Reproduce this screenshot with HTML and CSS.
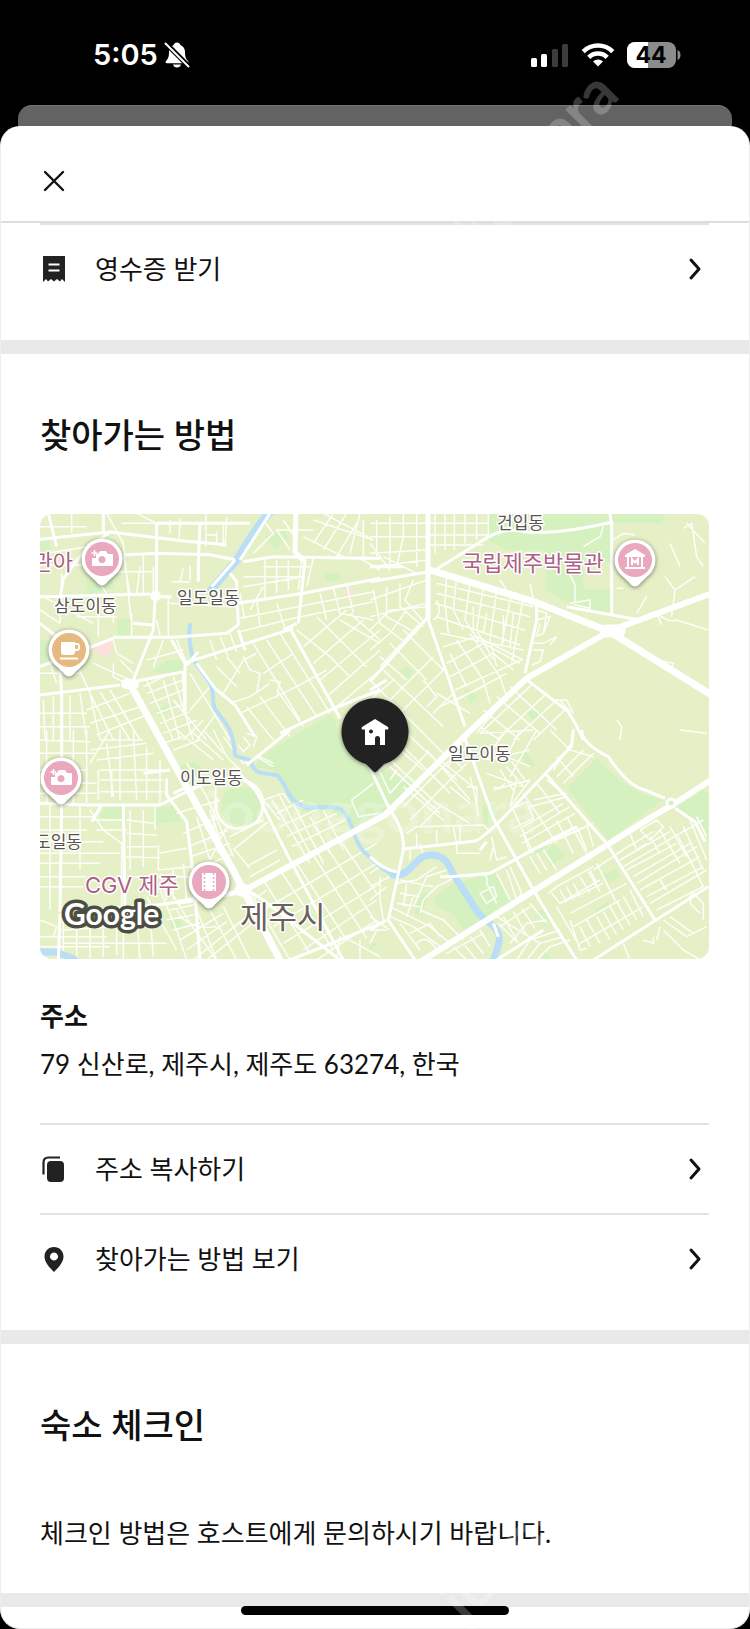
FILE: index.html
```html
<!DOCTYPE html>
<html lang="ko">
<head>
    <meta charset="UTF-8">
    <meta name="viewport" content="width=device-width, initial-scale=1.0">
    <title>찾아가는 방법</title>
    <link rel="stylesheet" href="styles.css">
</head>
<body>
    <div class="status-bar">
        <div class="status-left">
            <span class="time">5:05</span>
            <svg width="26" height="28" viewBox="0 0 26 28">
                <path d="M13 1.5c1.8 0 3 1 3.4 2.4 3 1.2 4.600 3.7 4.600 7.100 0 5.500 1.200 7 3 9 .8.9.5 2.200-.8 2.200H2.800c-1.300 0-1.600-1.300-.8-2.200 1.800-2 3-3.500 3-9 0-3.400 1.600-5.900 4.600-7.100C10 2.500 11.200 1.500 13 1.500z" fill="#fff"/>
                <path d="M9 23.5h8c-.5 2-2 3-4 3s-3.500-1-4-3z" fill="#fff"/>
                <path d="M0 .5l25 25" stroke="#000" stroke-width="5"/>
                <path d="M1.5 2.500l23 23" stroke="#fff" stroke-width="2" stroke-linecap="round"/>
            </svg>
        </div>
        <div class="status-right">
            <svg width="38" height="24" viewBox="0 0 38 24">
                <rect x="0" y="15" width="6" height="9" rx="1.5" fill="#fff"/>
                <rect x="10" y="11" width="6" height="13" rx="1.5" fill="#fff"/>
                <rect x="21" y="6" width="6" height="18" rx="1.5" fill="#3d3d3d"/>
                <rect x="31" y="1" width="6" height="23" rx="1.5" fill="#3d3d3d"/>
            </svg>
            <svg width="34" height="24" viewBox="0 0 34 24">
                <g fill="none" stroke="#fff" stroke-width="4.5">
                    <path d="M2.2 8.6a21 21 0 0 1 29.6 0"/>
                    <path d="M7.8 14.4a13 13 0 0 1 18.4 0"/>
                </g>
                <path d="M17 23.5l-5-5a7 7 0 0 1 10 0z" fill="#fff"/>
            </svg>
            <svg class="battery" width="54" height="26" viewBox="0 0 54 26">
                <rect x="0" y="0" width="49" height="26" rx="8" fill="#8c8c8c"/>
                <path d="M21 0H8a8 8 0 0 0-8 8v10a8 8 0 0 0 8 8h13z" fill="#fff"/>
                <path d="M50.5 8c4 1 4 9 0 10z" fill="#8c8c8c"/>
                <text x="24" y="21" text-anchor="middle">44</text>
            </svg>
        </div>
    </div>
    <div class="back-card"></div>

    <main class="sheet">
        <header class="sheet-header">
            <button class="close" aria-label="닫기">
                <svg width="24" height="24" viewBox="0 0 24 24"><path d="M3 3l18 18M21 3L3 21" stroke="#111" stroke-width="2.4" stroke-linecap="round"/></svg>
            </button>
        </header>

        <section class="section section-receipt">
            <button class="row">
                <svg class="row-icon" width="28" height="28" viewBox="0 0 28 28">
                    <path d="M3 1h22v26l-3-3-2 2.5-3-2.500-3 2.500-3-2.500-3 2.500-2-2.500-3 3z" fill="#222"/>
                    <path d="M8.500 9.500h11M8.500 15.500h11" stroke="#fff" stroke-width="2.200"/>
                </svg>
                <span class="row-text">영수증 받기</span>
                <svg class="chevron" width="28" height="28" viewBox="0 0 28 28"><path d="M10 5l8 9-8 9"/></svg>
            </button>
        </section>

        <section class="section">
            <h2>찾아가는 방법</h2>
            <svg class="map" viewBox="0 0 669 445">
                <defs>
                    <g id="pin">
                        <path d="M0 26.5C-2 26.5-4 25-6 22.5L-15 14A20.5 20.5 0 1 1 15 14L6 22.5C4 25 2 26.5 0 26.5z" fill="#fff"/>
                    </g>
                    <g id="camera" fill="#fff">
                        <path fill-rule="evenodd" d="M-4-5l2-3h6l2 3h4q1 0 1 1V6q0 1-1 1H-9q-1 0-1-1V-1h4v-4zM0-3a3.600 3.600 0 1 0 .01 0z"/>
                        <path d="M-8.300-9h1.600v2.200h2.200v1.600h-2.200V-3h-1.600v-2.200h-2.200v-1.600h2.200z"/>
                    </g>
                </defs>
                <rect width="669" height="445" fill="#e5f0c6"/>

                <!-- parks -->
                <g fill="#d5f1c0">
                    <g transform="translate(-10 -14) scale(.33333)">
                        <path d="M30 120l26 0 8 30-34 5zM170 240l80-30 0 55-80 20zM262 358h40l-4 60-36-10zM705 110l60-22 10 30-40 30zM885 218h43v25h-43zM365 515l50-35 45 0 6 40-60-2zM378 630l50-24 4 22-46 22zM30 420h20v70H30z"/>
                    </g>
                    <g transform="translate(330 -14) scale(.33333)">
                        <path d="M355 40h365l7 65-2 235-100-18-98-50V150h-120l-53-30zM720 40h165l-10 30H730zM90 512l20-14 20 18-18 22zM283 568l42 20-25 28zM470 640l22-18 18 22-20 20z"/>
                        <path d="M640 190h84v76h-84z" fill="#e5f0c6"/>
                    </g>
                    <g transform="translate(-10 216) scale(.33333)">
                        <path d="M695 78L905-50l45 120 200 90-105 110-75 15q-40-50-150-40-45-15-60-80-30-60-90-50zM440 110l55-15 30 30 0 40-55 25zM205 262l25-38h55l-2 46zM375 235l55-10 25 48-75 8zM575 230q0-60 55-60 60 0 62 55 0 60-60 60-60-5-57-55zM420 565h32v30h-30z"/>
                    </g>
                    <g transform="translate(330 216) scale(.33333)">
                        <path d="M590 175L680 85l75 70 70 40 55 15-165 120zM920 230l60-55 35 15v130l-40-50zM195 500l50-38 130-33 50 95-145 75-30-45-55-30zM337 225h38l-5 70-30-20zM447 75l18-12 32 40-15 10zM480 360l50-28 5 20-45 24zM520 370l35-28 30 32-42 38zM150 490h25l-20 65h-22zM700 435l40-20 10 20-35 28zM675 540l40-26 6 14-38 24zM500 545l25-15 15 40-15 20zM0 170l30 70-30 20zM510 690l15-25 20 20zM0 640h25l-25 20z"/>
                    </g>
                </g>
                <g fill="#fae1da" transform="translate(-10 -14) scale(.33333)">
                    <path d="M185 442l65-25-2 40-30 18zM945 264h32l-12 20-14 6z"/>
                </g>

                <!-- small streets -->
                <g fill="none" stroke="#fdfefa" stroke-width="4.500">
                    <path transform="translate(-10 -14) scale(.33333)" d="M30 80h140M125 40v60M50 160l120-20M30 195h130M95 220l-5 150M230 40l50 90 15 150 8 80M275 70h100M320 40l60 30M420 60l0 40M450 55l-2 60M160 180l70 100M280 170l20 110M340 165v115M240 215h130M330 200l-10 80M370 200v80M40 290l150 80M205 290v120M250 290v80M305 340v70M30 330l60 40M140 350h120M380 360l10 50M415 290v120M528 40v100M580 75v65M530 105h28M560 95v35M590 50l-5 90M460 205l-10 40M480 195v45M425 245h55M410 310l210 10M640 230h60M640 260l180-30M660 330l40-70M705 180v115M740 180v100M775 180v90M815 180l-10 90M850 175l-20 85M700 200h140M680 230h140M630 355l200-40 200-40M630 395l160-40 240-50M630 280l15 80M680 300l10 80M740 310l25 75M910 260l20 80 100 20M870 280l20 80M950 250l20 90M850 90h-110l40 60M760 60l40 60M700 60l30 40-60 60M850 130l60-90M880 150l70-110M920 170l60-100M960 160l30-120M820 110l130 65M850 60l180 60M880 40l150 80M1000 60v110M980 170l70 40M930 360l120 70M960 340l90 80M800 390l100 80 60 60M860 350l90 90 60 60M820 440l130-110M850 490l150-130M870 540l180-150M890 590l160-140M920 620l130-110M750 400l150 240M710 420l150 230M670 430l140 230M700 520l90-60M640 470l20 40 30 10-10 60M720 540l30 5-10 50M560 500l60 60M590 470l40 50M630 640l170-80 90-50M600 610l60-20 60-40M650 620l80 100M690 590l90 120M740 570l80 110M580 580l60-100 40-20M540 420l20 60M570 410l25 60M600 400l20 55M480 520l60 100 60 100M440 420l30 70M250 420l10 40 50 30M190 490l110 50M140 490l40 90 30 140M60 490l20 60M30 520h120M40 600l5 120M70 590v130M120 585v135M150 580l20 140M30 640h140M30 680h150M180 580l70 140M210 575l90 145M240 570l90 150M170 630l130-50M180 670l150-50M200 705l150-60M340 560l80-40M350 580l110-40M360 610l100-40M380 640l90-30M390 670l90-35M400 700l100-40M400 540l50 180M430 530l60 190M350 540l80 180M500 500l40 60-60 70M250 490l0 40 40 20M270 480l40 40M350 480l110-30M370 500l30-80M430 600l100 120M520 660l-60 60M560 640l-60 80"/>
                    <path transform="translate(330 -14) scale(.33333)" d="M0 70h175M0 110h170M0 160l170-10M0 200l170-20M20 60v110M60 50v150M100 40v70l-20 90M140 40v160M0 130l60 80M40 170l100 50M195 40v120M225 40v110M253 40v110M285 40v90M320 40v80M355 40v70M180 70h175M180 105h175M180 135h160M10 270l20 100 80 60M50 260v90l90 50M90 250l0 70 70 60M130 240l-25 60 60 70M0 300l170-60M0 350l170-40M0 390l60-60 110-10M0 450l60-50 50-70M30 500l120-130M30 470l80 70M60 430l110 110M100 390l120 120M60 600l130-130M90 640l130-130M0 540l80 80 80 80M40 510l180 170M0 600l70-60M230 230l-5 80 10 90M260 230l-10 100 30 60M300 250l-15 110 40 60M340 260l-20 130 50 90M380 270l-20 150 20 80M425 275l-30 160M460 290l-35 200M200 250l290 70M200 280l280 70M195 310l270 80M200 350l250 85M210 400l250 50M220 440l100-30 140 70M230 490l110-60 110 60M240 530l130-70 60 50M255 570l200-90M260 600l150-80M200 300q20 40-10 60M300 400l90 130 20 60M260 420l80 120 20 70M240 460l50 100M400 345v85M430 340l-10 100M310 320v70M350 340l-10 60M500 360l40-10-20 50-25 10M500 330l30 10-10 60M510 370l-10 40M480 430h40l40-20-20 25M490 450l30 0-10 35-25 10M480 250l10 50M390 240l20 30M595 215l20 40 0 60 45 10 0-25-60 10M730 120l30-20 35 5M640 140l50-30 10-30M740 265h20M950 70l55 60M965 70l-25 15M965 70l15 100 20 30M885 230l30 40-10 80M900 130l30 70M915 270l60-40M830 290l-30 50M860 340l15 35M860 340q40 30 60 20l95 30M860 480l50 10-10 20M740 660l15 20-5 40M930 690l80 10M160 540l40 50-30 30M200 580l100 60M210 620l130-60M190 640l60-60M330 680l60 40M340 630l110 90M380 590l130 110M420 560l140 130M330 700l160-150M380 720l150-140M430 720l130-120M490 720l100-95M550 600l40 0 20 40M570 600l30 35M460 540q-60 60-140 160"/>
                    <path transform="translate(-10 216) scale(.33333)" d="M30 30l150 5M30 70h170M30 120h140M50 0v220M130 0v220M170 0v220M205 120v90M245 120v80M30 160h170M30 190h170M210 30h130M180 60l170-20M200 90l170-20M210 120h210M210 150h190M210 185h190M230 40l20 160M270 0v210M310 0l10 210M350 50v160M390 90l0 130M240 0l-60 100M60 220v320M150 220v200M180 240l40 60 55 40 0 200M30 260h160M30 300h140M30 335h190M30 370h240M30 400h180M30 440h140M30 470h130M190 270h90M200 300h90M300 240v180M340 240v170M375 230v70M290 270l80 10M290 310l90 5M290 350h90M290 380l100 3M385 370l85-15M385 370v50l100-10M385 345v40M300 440h180M390 430l20 80M430 420v90M460 400l10 110M350 500l90 160M390 480l50 120 30 90M420 480l60 100 80 110M420 540l70-15M410 570l80-15M430 600l80-20M450 630l130-80M470 660l120-85M490 690l160-130M530 690l150-120M500 540l60 150M540 540l80 150M580 530l80 160M440 540q30 60 120 50M30 570l50 20-10 30M30 620h200M30 650h210M100 560v130M140 560v130M180 555v130M220 550v130M260 545v130M100 600l160-10M100 640h190M280 560v130M320 550l10 140M360 560l10 120M280 600l110-20M280 640h130M470 100l60 100 80 180M560 130l-10 180M440 250l130-40M460 310l110-50M475 350l120-50M480 380l120-40M500 420l110-50M500 260l40 130M540 240l50 150M560 310l0 50 60 60M440 0l110 90M480 0l100 90M520 0l60 70M550 0l40 80 40 40M430 60l80-30M400 40l60-20M640 20l20 25-20 20-15-20M650 10l30 10-10 30M580 20l60 80 50-20 40 20M610 110l40 40 40 30M590 290l-50 100M600 320l100-50M615 355l100-80M650 410l90-50M660 440l90-50M610 355l50 60M700 210l50 60M720 200l120 200M745 190l100 190M790 220l90 180M700 210l60-20 20 30M740 250l80-40M750 290l130-60M770 320l150-70M785 350l160-80M840 260l60 110M880 240l60 120M680 80l50 30M650 470l130 220M700 450l140 220M750 420l160 240M800 400l150 230M850 375l160 250M890 350l150 230M930 330l110 160M700 540l340-200M730 590l310-190M760 640l290-180M820 660l220-150M860 690l180-120M670 510l40-30M940 620l110 60M930 620l-10 70M990 630v60M1030 160l-65 50 20 50 60-10"/>
                    <path transform="translate(-10 216) scale(.33333)" d="M560 200q-10 80 50 95 90 5 90-80-10-50-50-60" stroke-width="8"/>
                    <path transform="translate(330 216) scale(.33333)" d="M100 0l160 150M70 20l170 170M150 0l80 80M40 70l160 150M60 110l150 140M0 60l60 130M20 130l70-60M60 190l110-120M90 60l70 60M60 150l20-30M100 170l120 100M100 230l160-160M120 270l170-170M150 290l60-60M200 220l100 60M210 90l110 90M230 60l50 60M170 60l130 150M290 50l-60 60M240 170l60 50M290 170l30 0 0 60M300 140l15 60 10 60M330 10l160-10M340 50l140 60M350 90l130-30M350 130l110 40M370 180l110-30M410 0l-60 80M450 0l-50 100M500 0l-80 140M540 0l60 60M370 170q20 10 35-10M390 120l40 60M410 110l50 60M425 95l40 55M440 150l-20 80M480 150l-60 80M550 120l60-90M560 140l80-80M580 160l90-90M560 80l50 60M600 60l70 20M530 150l50 40M500 160l70 90M460 190l100 150M430 240l60 130M420 240l50-25 20 50-60 30M460 290l120-70M450 320l150-90M455 340l160-90M460 310l20 60M480 230l110-30M490 210l100-20M560 270l50 100M590 260l60 110M620 290l30 70M650 280l20 70M550 330l120-50M470 370l180-80M480 380l30 50M500 370l30 50M520 360l40 60M535 490l25-20 110-60M545 490l25 30 120-70M570 520l130-60M600 550l170-90M600 570l30 90 20-5M610 590l140-80M630 640l190-110M570 480l20 35M590 470l20 40M610 460l20 40M630 440l30 50M655 425l35 60M660 420l20 40M630 590l30 60M650 570l40 70M680 560l40 70M700 545l40 70M720 530l40 70M740 515l40 70M760 500l40 70M780 480l40 80M560 530l70 120M680 400l60 120M670 420l90-60M780 310l20 50 30-20M810 300l50-30 20 20-40 40-30-30M740 370l110-65M750 390l150-85M760 410l170-100M770 420l150-80M790 440l170-100M800 460l180-110M810 480l180-100M830 500l170-90M840 520l170-100M860 540l140-70M930 310l70-40M920 310l50 100 30 60M940 290l60 130M960 270l50 120M980 260l30 60M840 320l30 50M870 300l60 100M900 290l50 90M870 450l20 30M880 570l70 50 60-30M900 560l70 50M870 590l-10 40M880 600l60 60 70 40M820 630l30 10 0-20M760 640l20 50M950 510l20-20 30 30 0 50M970 490l-10 30 30 30M110 310l30-20 200-5 20 20M140 310v40M200 300v50M250 290l10 50M270 290v50M260 340v30h70M365 320l15 70 30-10M370 350l-10 40M380 430l40 80M410 420l30 90 15-20-35-80M300 440q60-20 50 20l30 60M330 490l40-20 10 30-30 20zM260 440l-60 30-40 40-10 40M230 420l-60 20-40 90M200 410l-60 40-60 10M90 450l100 20M90 490l60 10M80 520l70 10M110 460l-10 70M130 500l-20 60M150 540l70 30 60 60M60 530l120 60 60 50M60 560l70 30M90 580l60 80M120 610l60-30 30 40M140 640q30-30 60 20M130 590l80 60M380 560l130 80M385 580l60 60M400 560l40 70M430 545l40 70M455 535l40 60M480 520l50 60M390 590l90-60M420 640l50-60 60-10M440 690l40-60 90-30M470 690l40-50 70-20M500 690l40-40 60-20M250 650l40 40M280 640l40 50M300 620l40 50M330 600l30 50M230 670l110-60M0 430l30-20 40 20M0 470l60-30M0 510l50-40M30 440l0 70 10 60M0 560l60 40M0 600l50 0M20 600l-20 40M150 340l10 40M120 350v40"/>
                </g>

                <!-- water -->
                <g fill="none" stroke="#b9def5" stroke-linecap="round">
                    <path d="M232-4C216 12 206 32 196 47L171 76" stroke-width="8"/>
                    <path d="M150 111c-2 12 0 22 3 34l18 26c4 12 0 16 4 24 10 14 18 18 20 46 6 5 10 1 16 6 2 14 14 12 26 14 10 10 10 22 20 28 14 10 30 0 44 6 12 10 12 30 22 42l20 18 10 6" stroke-width="4"/>
                    <path d="M353 361c20 2 20-20 38-20 16 0 18 12 24 22l22 34c6 10 18 12 22 24 2 10-4 16-6 28" stroke-width="7"/>
                    <path d="M0 438h16l18 7" stroke-width="7"/>
                </g>

                <!-- middle roads -->
                <g fill="none" stroke="#fff" stroke-width="9" stroke-linejoin="round">
                    <path transform="translate(-10 -14) scale(.33333)" d="M55 40l25 100M30 118l210-22 230 28 120 10M240 96l-80 60-60 80-10 60M380 70v210M280 165l100-5 160 4 75 15M380 70h280M510 65l-5 130 0 50M30 290l330-8M220 40v60M380 290l45 0M250 412h180l160-12 35-25M625 375l-5-130-20-25M375 300l-5 90-60 150M310 370l60 5M460 490l160-50 170-55M30 500l130-50 90-35M425 420l40 70 0 150M30 370l50 40M470 495l35-40M615 180l-70 80M630 180l90-140M640 185l90-15 270 5M1000 175l50 0M620 310l200-30 230-45M825 180l-20 190M760 390l40-20M780 385l150 270M310 545l150-30M460 520l5 100M500 490l55 75 60 50 60 95M30 585l240-30M90 490l5 100 0 130M625 390l20 60M750 700l150-70 150-60"/>
                    <path transform="translate(330 -14) scale(.33333)" d="M0 245l175-30M175 350L0 545M175 360l110 320M180 220l160-100q60-40 120-25 100 10 270-30M725 70v270M500 300v60l-35 160M465 535l130 100q30 50 45 85M590 320l220 40M720 40l5 40M0 570l50-30M0 200h100"/>
                    <path transform="translate(-10 216) scale(.33333)" d="M30 220l140 5h220l60-30 130-60M95 215l-5 330M95 0v90M130 545l250-20 110-15M235 225h-20l-30 50M280 225l5 320M410 145v50l60 80 20 160 20 255M280 540l0 70M650 105L780 0M640 150q40 20 60 80l70 140 170 320M430 190l30-15M650 480l50 30 230 180M340 130l80-10M780 690l150-60 120-50M90 550l-5 140"/>
                    <path transform="translate(330 216) scale(.33333)" d="M-40 30l100 210M285 25l85 240 120 215 60 100 70 110M60 240q45 60 40 120L55 570M95 358l220-25q20-5 90-75l200-210 5-50M240 440l120-10 200-110 60-30M525 130l185 210 145 230M0 380q40 40 80 45M55 570l80 120M0 600l50-30M210 440l30 0M670 690l345-220M635 0q0 40 80 80 60 90 110 100l60 25M915 235l60 40 30 60M330 360l20-25M520 600l-140 90M370 580l15 40"/>
                </g>
                <!-- main roads -->
                <g fill="none" stroke="#fff" stroke-linecap="round">
                    <path d="M256-4l-1 42 8 8M388-4v108M1 189" stroke-width="5"/>
                    <path d="M91 172l43 78 60 108 48 92" stroke-width="7"/>
                    <path d="M86 170h8M115 82h1" stroke-width="10"/>
                    <path d="M205 376l140-75 84-83 58-54 85-48 98-36" stroke-width="6"/>
                    <path d="M390 56l105 32 75 30 100 62" stroke-width="7"/>
                    <path d="M566 117h13M201 376h2" stroke-width="13"/>
                    <path d="M380 448l230-144 24-14 40-26" stroke-width="6"/>
                    <path d="M140 388l60-10" stroke-width="5"/>
                    <circle cx="631" cy="289" r="4" fill="#d5f1c0" stroke-width="3"/>
                </g>

                <!-- place names -->
                <g class="map-label">
                    <text x="137" y="90">일도일동</text>
                    <text x="14" y="98">삼도이동</text>
                    <text x="457" y="15">건입동</text>
                    <text x="140" y="270">이도일동</text>
                    <text x="-5" y="334">도일동</text>
                    <text x="408" y="246">일도이동</text>
                </g>
                <text class="map-city" x="200" y="414">제주시</text>
                <g class="map-poi">
                    <text x="33" y="56" text-anchor="end">관아</text>
                    <text x="422" y="57">국립제주박물관</text>
                    <text x="45" y="379">CGV 제주</text>
                </g>
                <text class="map-logo" x="24" y="411">Google</text>

                <!-- pins -->
                <g class="pin" transform="translate(62 45)">
                    <use href="#pin"/><circle r="17" fill="#e9a8be"/><use href="#camera"/>
                </g>
                <g class="pin" transform="translate(21 264)">
                    <use href="#pin"/><circle r="17" fill="#e9a8be"/><use href="#camera"/>
                </g>
                <g class="pin" transform="translate(29 136)">
                    <use href="#pin"/><circle r="17" fill="#e6b980"/>
                    <path d="M-8-8H6V2q0 3-3 3h-8q-3 0-3-3z" fill="#fff"/>
                    <path d="M6-6h2q2 0 2 2v2q0 2-2 2H6M-9 8.500H9" fill="none" stroke="#fff" stroke-width="1.800"/>
                </g>
                <g class="pin" transform="translate(169 368)">
                    <use href="#pin"/><circle r="17" fill="#e9a8be"/>
                    <path d="M-7-9H7V9H-7z" fill="#fff"/>
                    <path d="M-4.500-9V9M4.500-9V9" stroke="#e9a8be" stroke-width="1.500" stroke-dasharray="2 2"/>
                </g>
                <g class="pin" transform="translate(595 46)">
                    <use href="#pin"/><circle r="17" fill="#e9a8be"/>
                    <path d="M0-11l10 6v2h-20v-2zM-8-3h2v10h-2zM6-3h2v10H6zM-10 7h20v2h-20z" fill="#fff"/>
                    <path d="M-3 5v-6l3 3.500L3-1v6" fill="none" stroke="#fff" stroke-width="2"/>
                </g>
                <g class="pin" transform="translate(335 218)">
                    <path d="M-9 32a33.500 33.500 0 1 1 18 0L1.500 39.500q-1.500 1.500-3 0z" fill="#222"/>
                    <path fill-rule="evenodd" d="M0-13l13 8q1 1 0 2.500h-3V13H5V6.500q0-2.500-2.500-2.500T0 6.500V13h-10V-2.500h-3q-1-1.500 0-2.500zM-4-2.500a2 2 0 1 0 .01 0z" fill="#fff"/>
                </g>
            </svg>

            <h3>주소</h3>
            <p class="address">79 신산로, 제주시, 제주도 63274, 한국</p>

            <button class="row">
                <svg class="row-icon" width="28" height="28" viewBox="0 0 28 28">
                    <rect x="7" y="6" width="17" height="21" rx="4" fill="#222"/>
                    <path d="M3.500 19.500V7.500q0-5 5-5H20" fill="none" stroke="#222" stroke-width="2.200"/>
                </svg>
                <span class="row-text">주소 복사하기</span>
                <svg class="chevron" width="28" height="28" viewBox="0 0 28 28"><path d="M10 5l8 9-8 9"/></svg>
            </button>
            <button class="row">
                <svg class="row-icon" width="28" height="28" viewBox="0 0 28 28">
                    <path fill-rule="evenodd" d="M14 2c5.500 0 9.500 4.200 9.500 9.500 0 6-5 11-9.500 15.500C9.500 22.500 4.500 17.500 4.500 11.500 4.500 6.200 8.500 2 14 2zm0 5.500a4 4 0 1 0 .01 0z" fill="#222"/>
                </svg>
                <span class="row-text">찾아가는 방법 보기</span>
                <svg class="chevron" width="28" height="28" viewBox="0 0 28 28"><path d="M10 5l8 9-8 9"/></svg>
            </button>
        </section>

        <section class="section section-checkin">
            <h2>숙소 체크인</h2>
            <p>체크인 방법은 호스트에게 문의하시기 바랍니다.</p>
        </section>
        <div class="home-indicator"></div>
    </main>

    <div class="watermarks" aria-hidden="true">
        <span class="watermark wm-top">joonggonara</span>
        <span class="watermark wm-map">joonggonara</span>
        <span class="watermark wm-bottom">joonggonara</span>
    </div>
</body>
</html>
```
FILE: styles.css
```css
* {
    box-sizing: border-box;
}
body {
    position: relative;
    margin: 0;
    background-color: #000;
    color: #111;
    font-family: Lato, "Noto Sans CJK KR", sans-serif;
    font-size: 26px;
    overflow-x: hidden;
}
h2, h3, p {
    margin: 0;
}
button {
    padding: 0;
    border: none;
    background: none;
    color: inherit;
    font: inherit;
    cursor: pointer;
}
svg {
    display: block;
}

/* status bar */
.status-bar {
    display: flex;
    justify-content: space-between;
    align-items: center;
    height: 105px;
    padding: 4px 69px 0 93px;
}
.status-left {
    display: flex;
    align-items: center;
    gap: 6px;
}
.time {
    color: #fff;
    font-family: Inter, sans-serif;
    font-size: 29px;
    font-weight: 600;
    line-height: 36px;
}
.status-right {
    display: flex;
    align-items: center;
    gap: 12px;
}
.battery text {
    font-family: Inter, sans-serif;
    font-size: 23px;
    font-weight: 700;
    fill: #000;
}

/* sheet */
.back-card {
    height: 21px;
    margin: 0 18px;
    border-top: 1px solid #777;
    border-radius: 14px 14px 0 0;
    background-color: #636363;
}
.sheet {
    position: relative;
    padding-bottom: 21px;
    border-radius: 20px;
    background-color: #fff;
    border: 1px solid #eee;
    border-top: none;
    overflow: hidden;
}
.sheet-header {
    height: 97px;
    padding: 41px 40px 0;
    border-bottom: 2px solid #ddd;
}
.close {
    padding: 1px;
}
.section {
    padding: 59px 40px 27px 39px;
    border-bottom: 14px solid #e9e9e9;
}
.section-receipt {
    padding-top: 0;
}
.section-checkin {
    padding-bottom: 42px;
}
h2 {
    margin-bottom: 57px;
    font-size: 34px;
    font-weight: 500;
    line-height: 44px;
}
h3 {
    margin-top: 33px;
    font-size: 26px;
    font-weight: 700;
    line-height: 48px;
}
.address {
    margin-bottom: 35px;
    line-height: 48px;
}
.section-checkin p {
    padding-top: 11px;
    line-height: 36px;
}
.row {
    display: flex;
    align-items: center;
    width: 100%;
    height: 90px;
    border-top: 2px solid #e2e2e2;
    text-align: left;
}
.row-text {
    flex: 1;
    margin-left: 27px;
    line-height: 36px;
}
.chevron {
    fill: none;
    stroke: #111;
    stroke-width: 3;
    stroke-linecap: round;
    stroke-linejoin: round;
}
.home-indicator {
    position: absolute;
    bottom: 13px;
    left: 50%;
    width: 268px;
    height: 9px;
    border-radius: 5px;
    background-color: #000;
    transform: translateX(-50%);
}

/* map */
.map {
    width: 100%;
    height: auto;
    border-radius: 12px;
}
.map text {
    paint-order: stroke;
    stroke: #fff;
    stroke-width: 3;
    stroke-linejoin: round;
}
.map-label {
    font-size: 17px;
    fill: #5a5450;
}
.map-city {
    font-size: 31px;
    fill: #6b615c;
}
.map-poi {
    font-family: Inter, "Noto Sans CJK KR", sans-serif;
    font-size: 22px;
    fill: #ad5f86;
}
.map .map-logo {
    font-size: 30px;
    font-weight: 700;
    fill: #fff;
    stroke: #4c4d43;
    stroke-width: 7;
}
.pin {
    filter: drop-shadow(0 1px 2px rgba(0, 0, 0, 0.5));
}

/* watermarks */
.watermarks {
    position: absolute;
    inset: 0;
    overflow: hidden;
    pointer-events: none;
}
.watermark {
    position: absolute;
    color: rgba(255, 255, 255, 0.22);
    font-size: 60px;
    font-weight: 700;
    line-height: 60px;
}
.wm-top {
    top: 168px;
    left: 322px;
    transform: rotate(-45deg);
}
.wm-map {
    top: 780px;
    left: 205px;
}
.wm-bottom {
    top: 1460px;
    left: 400px;
    transform: rotate(-45deg);
}
```
